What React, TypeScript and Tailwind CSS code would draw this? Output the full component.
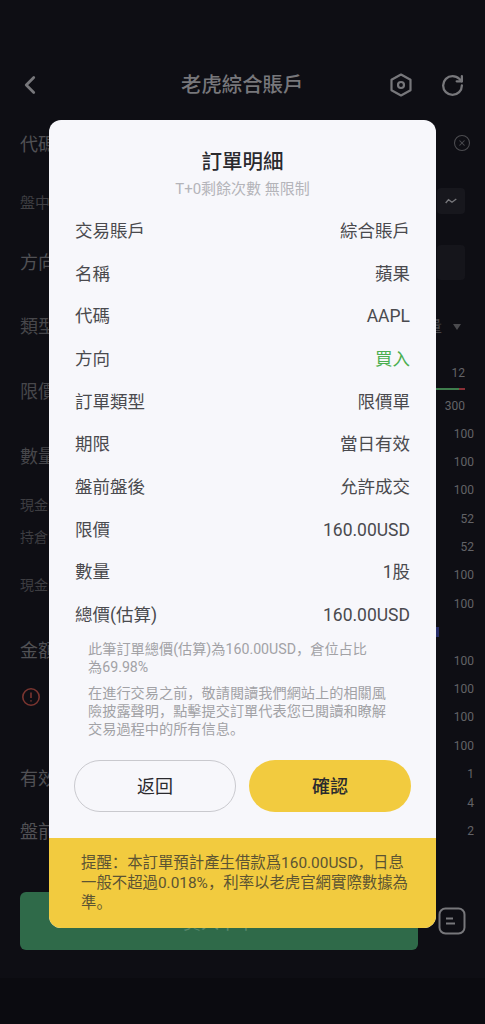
import { ChevronLeft, RotateCw, XCircle } from "lucide-react";

const font = { fontFamily: '"Roboto", "Noto Sans CJK SC", sans-serif' };

const orderRows = [
  { label: "交易賬戶", value: "綜合賬戶" },
  { label: "名稱", value: "蘋果" },
  { label: "代碼", value: "AAPL" },
  { label: "方向", value: "買入", green: true },
  { label: "訂單類型", value: "限價單" },
  { label: "期限", value: "當日有效" },
  { label: "盤前盤後", value: "允許成交" },
  { label: "限價", value: "160.00USD" },
  { label: "數量", value: "1股" },
  { label: "總價(估算)", value: "160.00USD" },
];

function Background() {
  return (
    <div className="flex flex-col">
      <header className="mt-[60px] flex h-[50px] items-center text-[#77777b]">
        <ChevronLeft className="ml-[15px] h-[30px] w-[30px]" strokeWidth={2.2} />
        <h1 className="ml-[136px] w-[122px] text-center text-[20.4px] font-medium whitespace-nowrap">老虎綜合賬戶</h1>
        <svg viewBox="0 0 26 26" className="ml-[85px] h-[26px] w-[26px]" fill="none" stroke="currentColor" strokeWidth="2.2">
          <path d="M13 2.5 22.5 7.8v10.4L13 23.5 3.5 18.2V7.8Z" strokeLinejoin="round" />
          <circle cx="13" cy="13" r="3" />
        </svg>
        <RotateCw className="ml-[26px] h-[25px] w-[25px]" strokeWidth={2.2} />
      </header>

      <div className="flex h-[868px] justify-between">
        <div className="ml-[20px] flex flex-col text-[18px] text-[#515155]">
          <div className="mt-[23px] h-[24px] leading-[24px]">代碼</div>
          <div className="mt-[36px] h-[20px] text-[15px] leading-[20px] text-[#3f3f43]">盤中</div>
          <div className="mt-[38px] h-[24px] leading-[24px]">方向</div>
          <div className="mt-[40px] h-[24px] leading-[24px] text-[#47474b]">類型</div>
          <div className="mt-[41px] h-[24px] leading-[24px] text-[#47474b]">限價</div>
          <div className="mt-[41px] h-[24px] leading-[24px] text-[#47474b]">數量</div>
          <div className="mt-[27px] h-[18px] text-[14px] leading-[18px] text-[#3d3d41]">現金</div>
          <div className="mt-[14px] h-[18px] text-[14px] leading-[18px] text-[#3d3d41]">持倉</div>
          <div className="mt-[30px] h-[18px] text-[14px] leading-[18px] text-[#3d3d41]">現金</div>
          <div className="mt-[45px] h-[24px] leading-[24px]">金額</div>
          <svg viewBox="0 0 20 20" className="mt-[24px] ml-[1px] h-[20px] w-[20px]" fill="none" stroke="#7a3530" strokeWidth="1.6">
            <circle cx="10" cy="10" r="8.2" />
            <path d="M10 5.5v5.5M10 13.2v1.4" />
          </svg>
          <div className="mt-[60px] h-[24px] leading-[24px]">有效</div>
          <div className="mt-[29px] h-[24px] leading-[24px]">盤前</div>
        </div>

        <div className="flex w-[60px] flex-col items-end pr-[11px] text-[12px] leading-[18px] text-[#636367]">
          <XCircle className="mt-[24px] mr-[3px] h-[18px] w-[18px] text-[#4c4c50]" strokeWidth={1.4} />
          <div className="mt-[36px] mr-[9px] flex h-[26px] w-[28px] items-center justify-center rounded-[4px] bg-[#17171d]">
            <svg viewBox="0 0 12 6" className="h-[6px] w-[12px]" fill="none" stroke="#77777b" strokeWidth="1.4">
              <path d="M.7 5 3.5 1.6 7 4.2 11.3 1" />
            </svg>
          </div>
          <div className="mt-[31px] mr-[9px] h-[35px] w-[28px] rounded-[4px] bg-[#15151b]" />
          <div className="mt-[38px] mr-[13px] flex h-[18px] items-center gap-[11px] text-[16px] text-[#47474b]">
            <span>量</span>
            <span className="h-0 w-0 border-x-[4px] border-t-[6px] border-x-transparent border-t-[#4a4a4e]" />
          </div>
          <div className="mt-[28px] mr-[9px] h-[18px]">12</div>
          <div className="mt-[6px] mr-[9px] flex h-[2px] w-[30px]">
            <span className="w-[24px] bg-[#3f7d4d]" />
            <span className="w-[6px] bg-[#8a2f36]" />
          </div>
          <div className="mt-[7px] mr-[9px] h-[18px]">300</div>
          <div className="mt-[10px] h-[18px]">100</div>
          <div className="mt-[10px] h-[18px]">100</div>
          <div className="mt-[10px] h-[18px]">100</div>
          <div className="mt-[11px] h-[18px]">52</div>
          <div className="mt-[10px] h-[18px]">52</div>
          <div className="mt-[10px] h-[18px]">100</div>
          <div className="mt-[11px] h-[18px]">100</div>
          <div className="mt-[39px] h-[18px]">100</div>
          <div className="mt-[10px] h-[18px]">100</div>
          <div className="mt-[10px] h-[18px]">100</div>
          <div className="mt-[11px] h-[18px]">100</div>
          <div className="mt-[10px] h-[18px]">1</div>
          <div className="mt-[11px] h-[18px]">4</div>
          <div className="mt-[10px] h-[18px]">2</div>
        </div>
      </div>

      <div className="absolute top-[892px] left-[20px] flex h-[58px] w-[398px] items-end justify-center rounded-[6px] bg-[#2f6a49] pb-[14px] text-[18px] text-[#5c8a70]">
        買入下單
      </div>
      <span className="absolute top-[627px] left-[436px] h-[10px] w-[3px] bg-[#262c66]" />
      <svg viewBox="0 0 28 28" className="absolute top-[907px] left-[438px] h-[28px] w-[28px]" fill="none" stroke="#77777b" strokeWidth="2">
        <rect x="1.5" y="1.5" width="25" height="25" rx="6" />
        <path d="M8 11.5h7M8 16.5h9" />
      </svg>
    </div>
  );
}

export default function App() {
  return (
    <div className="relative h-[1024px] w-[485px] overflow-hidden bg-[#0e0e14]" style={font}>
      <Background />
      <div className="absolute inset-x-0 top-[978px] h-[46px] bg-[#0b0b10]" />

      <div className="absolute top-[120px] left-[49px] flex w-[387px] flex-col overflow-hidden rounded-[12px] bg-[#f7f7fb]">
        <h2 className="mt-[28px] h-[28px] text-center text-[20.5px] leading-[28px] font-medium text-[#2a2a2e]">訂單明細</h2>
        <p className="mt-[1px] h-[24px] text-center text-[15px] leading-[24px] text-[#b4b4b9]">T+0剩餘次數 無限制</p>

        <div className="mt-[8.6px] px-[26px]">
          {orderRows.map((row) => (
            <div key={row.label} className="flex h-[42.7px] items-center justify-between text-[17.5px] text-[#4a4a4e]">
              <span>{row.label}</span>
              <span className={row.green ? "text-[#4caf50]" : ""}>{row.value}</span>
            </div>
          ))}
        </div>

        <div className="mt-[4px] ml-[39px] w-[302px] text-[14.2px] leading-[18px] text-[#a2a2a6]">
          <p>此筆訂單總價(估算)為160.00USD，倉位占比<br />為69.98%</p>
          <p className="mt-[8px]">在進行交易之前，敬請閱讀我們網站上的相關風險披露聲明，點擊提交訂單代表您已閱讀和瞭解交易過程中的所有信息。</p>
        </div>

        <div className="mt-[22px] flex justify-between px-[25px]">
          <button className="h-[52px] w-[162px] rounded-full border border-[#c9c9ce] text-[18px] text-[#2a2a2e]">返回</button>
          <button className="h-[52px] w-[162px] rounded-full bg-[#f2cb3f] text-[18px] font-medium text-[#2a2a2e]">確認</button>
        </div>

        <div className="mt-[26px] h-[90px] bg-[#f2cb3f] py-[15px] pr-[24px] pl-[32px] text-[15.4px] leading-[20px] text-[#5c5433]">
          提醒：本訂單預計產生借款爲160.00USD，日息<br />一般不超過0.018%，利率以老虎官網實際數據為<br />準。
        </div>
      </div>
    </div>
  );
}
